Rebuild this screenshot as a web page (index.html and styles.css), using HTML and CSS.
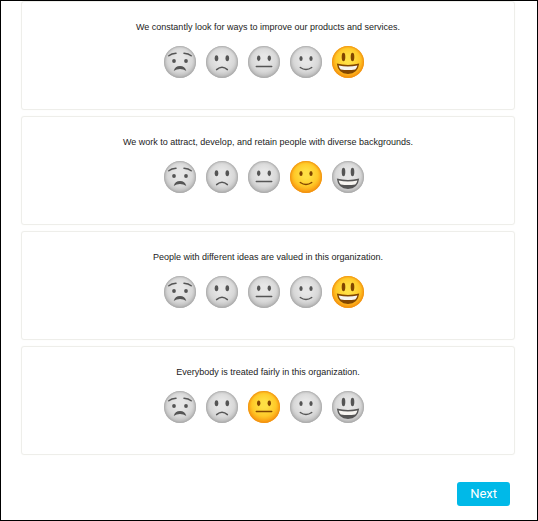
FILE: index.html
```html
<!DOCTYPE html>
<html lang="en">
<head>
  <meta charset="UTF-8" />
  <meta name="viewport" content="width=device-width, initial-scale=1.0" />
  <title>Employee Survey</title>
  <link rel="stylesheet" href="styles.css">
</head>
<body>
  <!-- face features, the round head itself is painted in css -->
  <svg class="sprites" width="0" height="0" aria-hidden="true">
    <symbol id="worried" viewBox="0 0 32 32">
      <path class="line" d="M4.8 9.8Q7.500 7.500 12 7.200M27.200 9.800Q24.500 7.500 20 7.200" />
      <ellipse cx="10" cy="15" rx="1.900" ry="2.100" />
      <ellipse cx="22" cy="15" rx="1.900" ry="2.100" />
      <path d="M9.700 24.900Q11 20 16 20T22.300 24.900Q19.500 22.900 16 22.900T9.700 24.900Z" />
    </symbol>
    <symbol id="sad" viewBox="0 0 32 32">
      <ellipse cx="10.500" cy="12.300" rx="1.800" ry="3" />
      <ellipse cx="21.300" cy="12.300" rx="1.800" ry="3" />
      <path class="line" d="M10.600 23.600Q16 19 21.400 23.600" />
    </symbol>
    <symbol id="neutral" viewBox="0 0 32 32">
      <ellipse cx="10.700" cy="12.300" rx="1.700" ry="2.900" />
      <ellipse cx="21.300" cy="12.300" rx="1.700" ry="2.900" />
      <path class="line" d="M8.300 20.500H23.700" />
    </symbol>
    <symbol id="smile" viewBox="0 0 32 32">
      <ellipse cx="11" cy="12.500" rx="1.600" ry="2.500" />
      <ellipse cx="21" cy="12.500" rx="1.600" ry="2.500" />
      <path class="line" d="M10.300 21.500Q16 25.500 21.700 21.500" />
    </symbol>
    <symbol id="grin" viewBox="0 0 32 32">
      <ellipse cx="11.500" cy="11" rx="1.800" ry="4.200" />
      <ellipse cx="20.500" cy="11" rx="1.800" ry="4.200" />
      <path d="M4.800 17.600Q16 20.400 27.200 17.600Q26 28 16 28T4.800 17.600Z" />
      <path fill="#f6f4f0" d="M6.600 19.400Q16 21.400 25.400 19.400Q24.800 22 23.200 23.400Q16 24.800 8.800 23.400Q7.200 22 6.600 19.400Z" />
    </symbol>
  </svg>

  <form class="survey">
    <fieldset class="question">
      <legend>We constantly look for ways to improve our products and services.</legend>
      <div class="faces">
        <label class="face"><input type="radio" name="q1" value="1" aria-label="Strongly disagree" /><svg><use href="#worried" /></svg></label>
        <label class="face"><input type="radio" name="q1" value="2" aria-label="Disagree" /><svg><use href="#sad" /></svg></label>
        <label class="face"><input type="radio" name="q1" value="3" aria-label="Neutral" /><svg><use href="#neutral" /></svg></label>
        <label class="face"><input type="radio" name="q1" value="4" aria-label="Agree" /><svg><use href="#smile" /></svg></label>
        <label class="face"><input type="radio" name="q1" value="5" aria-label="Strongly agree" checked /><svg><use href="#grin" /></svg></label>
      </div>
    </fieldset>

    <fieldset class="question">
      <legend>We work to attract, develop, and retain people with diverse backgrounds.</legend>
      <div class="faces">
        <label class="face"><input type="radio" name="q2" value="1" aria-label="Strongly disagree" /><svg><use href="#worried" /></svg></label>
        <label class="face"><input type="radio" name="q2" value="2" aria-label="Disagree" /><svg><use href="#sad" /></svg></label>
        <label class="face"><input type="radio" name="q2" value="3" aria-label="Neutral" /><svg><use href="#neutral" /></svg></label>
        <label class="face"><input type="radio" name="q2" value="4" aria-label="Agree" checked /><svg><use href="#smile" /></svg></label>
        <label class="face"><input type="radio" name="q2" value="5" aria-label="Strongly agree" /><svg><use href="#grin" /></svg></label>
      </div>
    </fieldset>

    <fieldset class="question">
      <legend>People with different ideas are valued in this organization.</legend>
      <div class="faces">
        <label class="face"><input type="radio" name="q3" value="1" aria-label="Strongly disagree" /><svg><use href="#worried" /></svg></label>
        <label class="face"><input type="radio" name="q3" value="2" aria-label="Disagree" /><svg><use href="#sad" /></svg></label>
        <label class="face"><input type="radio" name="q3" value="3" aria-label="Neutral" /><svg><use href="#neutral" /></svg></label>
        <label class="face"><input type="radio" name="q3" value="4" aria-label="Agree" /><svg><use href="#smile" /></svg></label>
        <label class="face"><input type="radio" name="q3" value="5" aria-label="Strongly agree" checked /><svg><use href="#grin" /></svg></label>
      </div>
    </fieldset>

    <fieldset class="question">
      <legend>Everybody is treated fairly in this organization.</legend>
      <div class="faces">
        <label class="face"><input type="radio" name="q4" value="1" aria-label="Strongly disagree" /><svg><use href="#worried" /></svg></label>
        <label class="face"><input type="radio" name="q4" value="2" aria-label="Disagree" /><svg><use href="#sad" /></svg></label>
        <label class="face"><input type="radio" name="q4" value="3" aria-label="Neutral" checked /><svg><use href="#neutral" /></svg></label>
        <label class="face"><input type="radio" name="q4" value="4" aria-label="Agree" /><svg><use href="#smile" /></svg></label>
        <label class="face"><input type="radio" name="q4" value="5" aria-label="Strongly agree" /><svg><use href="#grin" /></svg></label>
      </div>
    </fieldset>

    <div class="actions">
      <button type="submit" class="next">Next</button>
    </div>
  </form>
</body>
</html>
```
FILE: styles.css
```css
* {
  box-sizing: border-box;
}
body {
  margin: 0;
  min-height: 100vh;
  border: 1px solid #000;
  background: #fff;
  color: #222;
  font-family: "Liberation Sans", Arial, sans-serif;
  font-size: 9px;
}
.sprites {
  position: absolute;
}
.line {
  fill: none;
  stroke: currentColor;
  stroke-width: 1.5;
  stroke-linecap: round;
}
.survey {
  display: flex;
  flex-direction: column;
  gap: 6px;
  padding: 0 22px 14px 20px;
}
.question {
  margin: 0;
  min-width: 0;
  padding: 19px 8px 31px;
  border: 1px solid #eeeeea;
  border-radius: 3px;
  box-shadow: 0 0 1px #eeeeea;
}
/* float keeps the legend inside the border */
.question legend {
  float: left;
  width: 100%;
  padding: 0;
  line-height: 12px;
  text-align: center;
}
.faces {
  clear: both;
  display: flex;
  justify-content: center;
  gap: 10px;
  padding: 13px 9px 0 0;
}
.face {
  position: relative;
  width: 32px;
  height: 32px;
  cursor: pointer;
}
.face input {
  position: absolute;
  inset: 0;
  width: 100%;
  height: 100%;
  margin: 0;
  opacity: 0;
  cursor: pointer;
}
.face svg {
  display: block;
  width: 32px;
  height: 32px;
  border-radius: 50%;
  background: radial-gradient(circle at 50% 42%, #e6e6e6 20%, #d8d8d8 50%, #b8b8b8 74%);
  box-shadow: inset 0 0 2px 1px #aaa;
  color: #555;
  fill: currentColor;
}
.face input:checked + svg {
  background: radial-gradient(circle at 50% 42%, #ffe044 15%, #ffc928 48%, #f9950f 75%);
  box-shadow: inset 0 0 2px 1px #f0920f;
  color: #824600;
}
.face input:focus-visible + svg {
  outline: 2px solid #00b9e8;
}
.actions {
  display: flex;
  justify-content: flex-end;
  padding: 21px 5px 0 0;
}
.next {
  padding: 4px 13px;
  border: none;
  border-radius: 3px;
  background: #00b9e8;
  color: #fff;
  font-family: Roboto, sans-serif;
  font-size: 13px;
  line-height: 16px;
  cursor: pointer;
}
.next:hover {
  background: #00a5cf;
}
```
